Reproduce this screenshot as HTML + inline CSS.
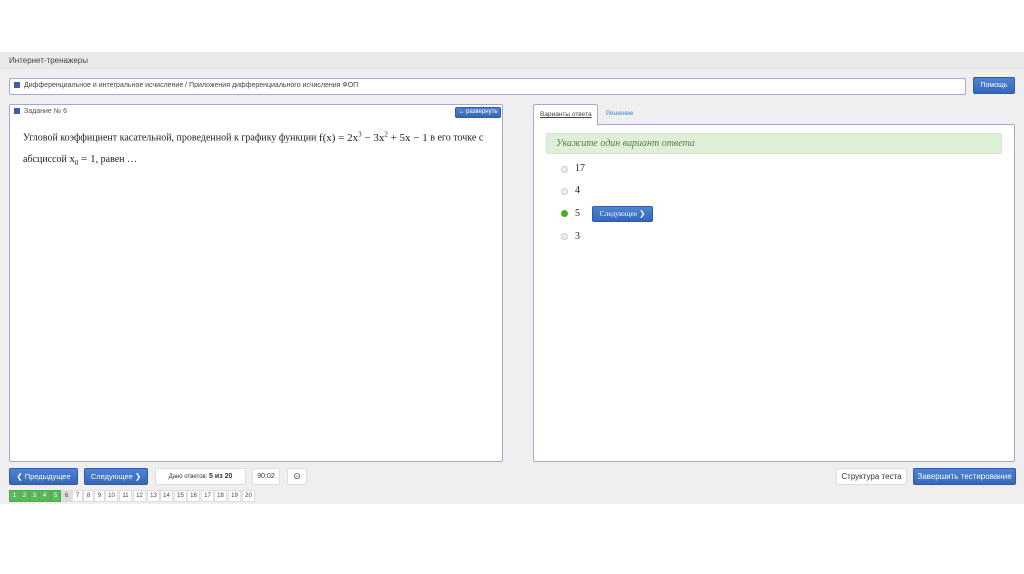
<!DOCTYPE html><html><head><meta charset="utf-8"><style>
*{box-sizing:border-box;margin:0;padding:0}
body{width:1024px;height:574px;background:#fff;position:relative;font-family:"Liberation Sans",sans-serif;overflow:hidden}
.a{position:absolute}
.gray{left:0;top:52px;width:1024px;height:452px;background:#efefef}
.hdr{left:0;top:52px;width:1024px;height:17px;background:#e9e9e9;font-size:8px;color:#444;padding:4px 9px}
.box{background:#fff;border:1px solid #a9a8cc;border-radius:2px}
.btn{background:linear-gradient(#4f84d2,#3566bb);color:#fff;border-radius:2px;font-size:7px;text-align:center;border:1px solid #2f5aa6}
.wb{background:#fff;border:1px solid #ddd;border-radius:2px;font-size:7px;text-align:center;color:#333}
.sq{display:inline-block;width:6px;height:6px;background:#3d5ea8;margin-right:4px;vertical-align:-1px}
.serif{font-family:"Liberation Serif",serif;color:#222}
.rad{width:7px;height:7px;border-radius:50%;border:1px solid #ccc;background:#eee}
.pg{top:490px;width:11px;height:12px;font-size:6px;line-height:11px;text-align:center;border:1px solid #ddd;background:#fff;color:#444}
.pg.g{background:#5cb85c;color:#fff;border-color:#4cae4c}
</style></head><body>
<div class="a gray"></div>
<div class="a hdr">Интернет-тренажеры</div>
<div class="a box" style="left:9px;top:78px;width:957px;height:17px;font-size:7px;color:#444;padding:3px 4px"><span class="sq"></span>Дифференциальное и интегральное исчисление / Приложения дифференциального исчисления ФОП</div>
<div class="a btn" style="left:973px;top:77px;width:42px;height:17px;line-height:15px">Помощь</div>
<div class="a box" style="left:9px;top:104px;width:494px;height:358px"></div>
<div class="a" style="left:14px;top:108px;font-size:7px;color:#555"><span class="sq"></span>Задание № 6</div>
<div class="a btn" style="left:455px;top:107px;width:46px;height:11px;font-size:6px;line-height:9px">↔ развернуть</div>
<div class="a serif" style="left:23px;top:124px;font-size:10px;line-height:20px;white-space:nowrap">Угловой коэффициент касательной, проведенной к графику функции <span style="font-size:11px">f(x) = 2x<sup style="font-size:7px">3</sup> − 3x<sup style="font-size:7px">2</sup> + 5x − 1</span> в его точке с<br>абсциссой <span style="font-size:11px">x<sub style="font-size:7px">0</sub> = 1</span>, равен …</div>
<div class="a box" style="left:533px;top:124px;width:482px;height:338px"></div>
<div class="a" style="left:533px;top:104px;width:65px;height:21px;background:#fff;border:1px solid #a9a8cc;border-bottom:none;border-radius:2px 2px 0 0;font-size:6.5px;color:#444;text-decoration:underline;padding:6px 0 0 6px">Варианты ответа</div>
<div class="a" style="left:606px;top:110px;font-size:6.5px;color:#3a87c8">Решение</div>
<div class="a" style="left:546px;top:133px;width:456px;height:21px;background:#dff0d8;border:1px solid #d0e9c6;border-radius:2px;font-family:'Liberation Serif',serif;font-style:italic;font-size:10px;color:#5a7a50;padding:4px 9px">Укажите один вариант ответа</div>
<div class="a rad" style="left:561px;top:166px"></div><div class="a serif" style="left:575px;top:163px;font-size:10px">17</div>
<div class="a rad" style="left:561px;top:188px"></div><div class="a serif" style="left:575px;top:185px;font-size:10px">4</div>
<div class="a rad" style="left:561px;top:210px;background:#4caf20;border-color:#4caf20"></div><div class="a serif" style="left:575px;top:208px;font-size:10px">5</div>
<div class="a btn" style="left:592px;top:206px;width:61px;height:16px;line-height:14px;font-family:'Liberation Serif',serif;font-size:7.5px">Следующее ❯</div>
<div class="a rad" style="left:561px;top:233px"></div><div class="a serif" style="left:575px;top:231px;font-size:10px">3</div>
<div class="a btn" style="left:9px;top:468px;width:69px;height:17px;line-height:15px;font-size:7.5px">❮ Предыдущее</div>
<div class="a btn" style="left:84px;top:468px;width:64px;height:17px;line-height:15px;font-size:7.5px">Следующее ❯</div>
<div class="a wb" style="left:155px;top:468px;width:91px;height:17px;line-height:15px;font-size:6px">Дано ответов: <b style="font-size:7px">5 из 20</b></div>
<div class="a wb" style="left:252px;top:468px;width:28px;height:17px;line-height:15px">90:02</div>
<div class="a wb" style="left:287px;top:468px;width:20px;height:17px;line-height:14px;font-size:9px">⊙</div>
<div class="a wb" style="left:836px;top:468px;width:71px;height:17px;line-height:15px;font-size:8px">Структура теста</div>
<div class="a btn" style="left:913px;top:468px;width:103px;height:17px;line-height:15px;font-size:8px">Завершить тестирование</div>
<div class="a pg g" style="left:9px">1</div><div class="a pg g" style="left:19px">2</div><div class="a pg g" style="left:29px">3</div><div class="a pg g" style="left:39px">4</div><div class="a pg g" style="left:50px">5</div>
<div class="a pg" style="left:61px;background:#ddd">6</div><div class="a pg" style="left:72px">7</div><div class="a pg" style="left:83px">8</div><div class="a pg" style="left:94px">9</div>
<div class="a pg" style="left:105px;width:13px">10</div><div class="a pg" style="left:119px;width:13px">11</div><div class="a pg" style="left:133px;width:13px">12</div><div class="a pg" style="left:147px;width:13px">13</div><div class="a pg" style="left:160px;width:13px">14</div><div class="a pg" style="left:174px;width:13px">15</div><div class="a pg" style="left:187px;width:13px">16</div><div class="a pg" style="left:201px;width:13px">17</div><div class="a pg" style="left:214px;width:13px">18</div><div class="a pg" style="left:228px;width:13px">19</div><div class="a pg" style="left:242px;width:13px">20</div>
</body></html>
